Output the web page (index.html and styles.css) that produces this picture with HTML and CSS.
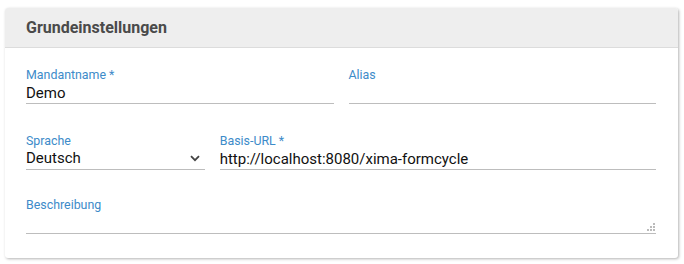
FILE: index.html
```html
<!DOCTYPE html>
<html lang="de">
<head>
    <title>Grundeinstellungen</title>
    <link rel="stylesheet" href="styles.css">
</head>
<body>
    <div class="panel">
        <div class="panel-header">
            <h3>Grundeinstellungen</h3>
        </div>
        <div class="panel-body">
            <div class="row">
                <div class="field half">
                    <label>Mandantname *</label>
                    <input type="text" value="Demo">
                </div>
                <div class="field half">
                    <label>Alias</label>
                    <input type="text" value="">
                </div>
            </div>
            <div class="row">
                <div class="field small">
                    <label>Sprache</label>
                    <div class="select">
                        <span>Deutsch</span>
                        <svg width="10" height="7" viewBox="0 0 10 7"><path d="M1 1.2 L5 5.2 L9 1.2" fill="none" stroke="#444" stroke-width="1.8"/></svg>
                    </div>
                </div>
                <div class="field wide">
                    <label>Basis-URL *</label>
                    <input type="text" value="http://localhost:8080/xima-formcycle">
                </div>
            </div>
            <div class="row last">
                <div class="field full">
                    <label>Beschreibung</label>
                    <div class="textarea">
                        <svg class="grip" width="8" height="8" viewBox="0 0 8 8">
                            <rect x="6" y="0" width="2" height="2" fill="#bbb"/>
                            <rect x="3" y="3" width="2" height="2" fill="#bbb"/>
                            <rect x="6" y="3" width="2" height="2" fill="#bbb"/>
                            <rect x="0" y="6" width="2" height="2" fill="#bbb"/>
                            <rect x="3" y="6" width="2" height="2" fill="#bbb"/>
                            <rect x="6" y="6" width="2" height="2" fill="#bbb"/>
                        </svg>
                    </div>
                </div>
            </div>
        </div>
    </div>
</body>
</html>
```

FILE: styles.css
```css
body {
    font-family: Roboto, "Liberation Sans", sans-serif;
    margin: 0;
    padding: 8px 6px 6px 5px;
    background-color: #fff;
}

.panel {
    width: 673px;
    background-color: #fff;
    border-radius: 3px;
    box-shadow: 1px 1px 3px rgba(0, 0, 0, 0.3);
    overflow: hidden;
}

.panel-header {
    background-color: #eee;
    border-bottom: 1px solid #dcdcdc;
    height: 39px;
    display: flex;
    align-items: center;
    padding: 0 21px;
}

.panel-header h3 {
    margin: 0;
    font-size: 16px;
    font-weight: bold;
    color: #4a4a4a;
}

.panel-body {
    padding: 20px 22px 24px 21px;
    display: flex;
    flex-direction: column;
    gap: 30px;
}

.row {
    display: flex;
    gap: 15px;
}

.row.last {
    margin-top: -2px;
}

.field {
    display: flex;
    flex-direction: column;
}

.half {
    width: 308px;
}

.small {
    width: 179px;
}

.wide {
    width: 437px;
}

.full {
    width: 630px;
}

.field label {
    font-size: 12.4px;
    line-height: 14px;
    color: #3d8bc9;
}

.field input,
.select {
    font-family: Roboto, "Liberation Sans", sans-serif;
    font-size: 15px;
    color: #111;
    border: none;
    border-bottom: 1px solid #bdbdbd;
    height: 21px;
    padding: 0;
    margin: 0;
    outline: none;
    background: transparent;
    box-sizing: content-box;
}

.select {
    display: flex;
    align-items: center;
    justify-content: space-between;
    padding-right: 5px;
    line-height: 21px;
}

.textarea {
    height: 21px;
    border-bottom: 1px solid #bdbdbd;
    position: relative;
}

.grip {
    position: absolute;
    right: 1px;
    bottom: 2px;
}
```
